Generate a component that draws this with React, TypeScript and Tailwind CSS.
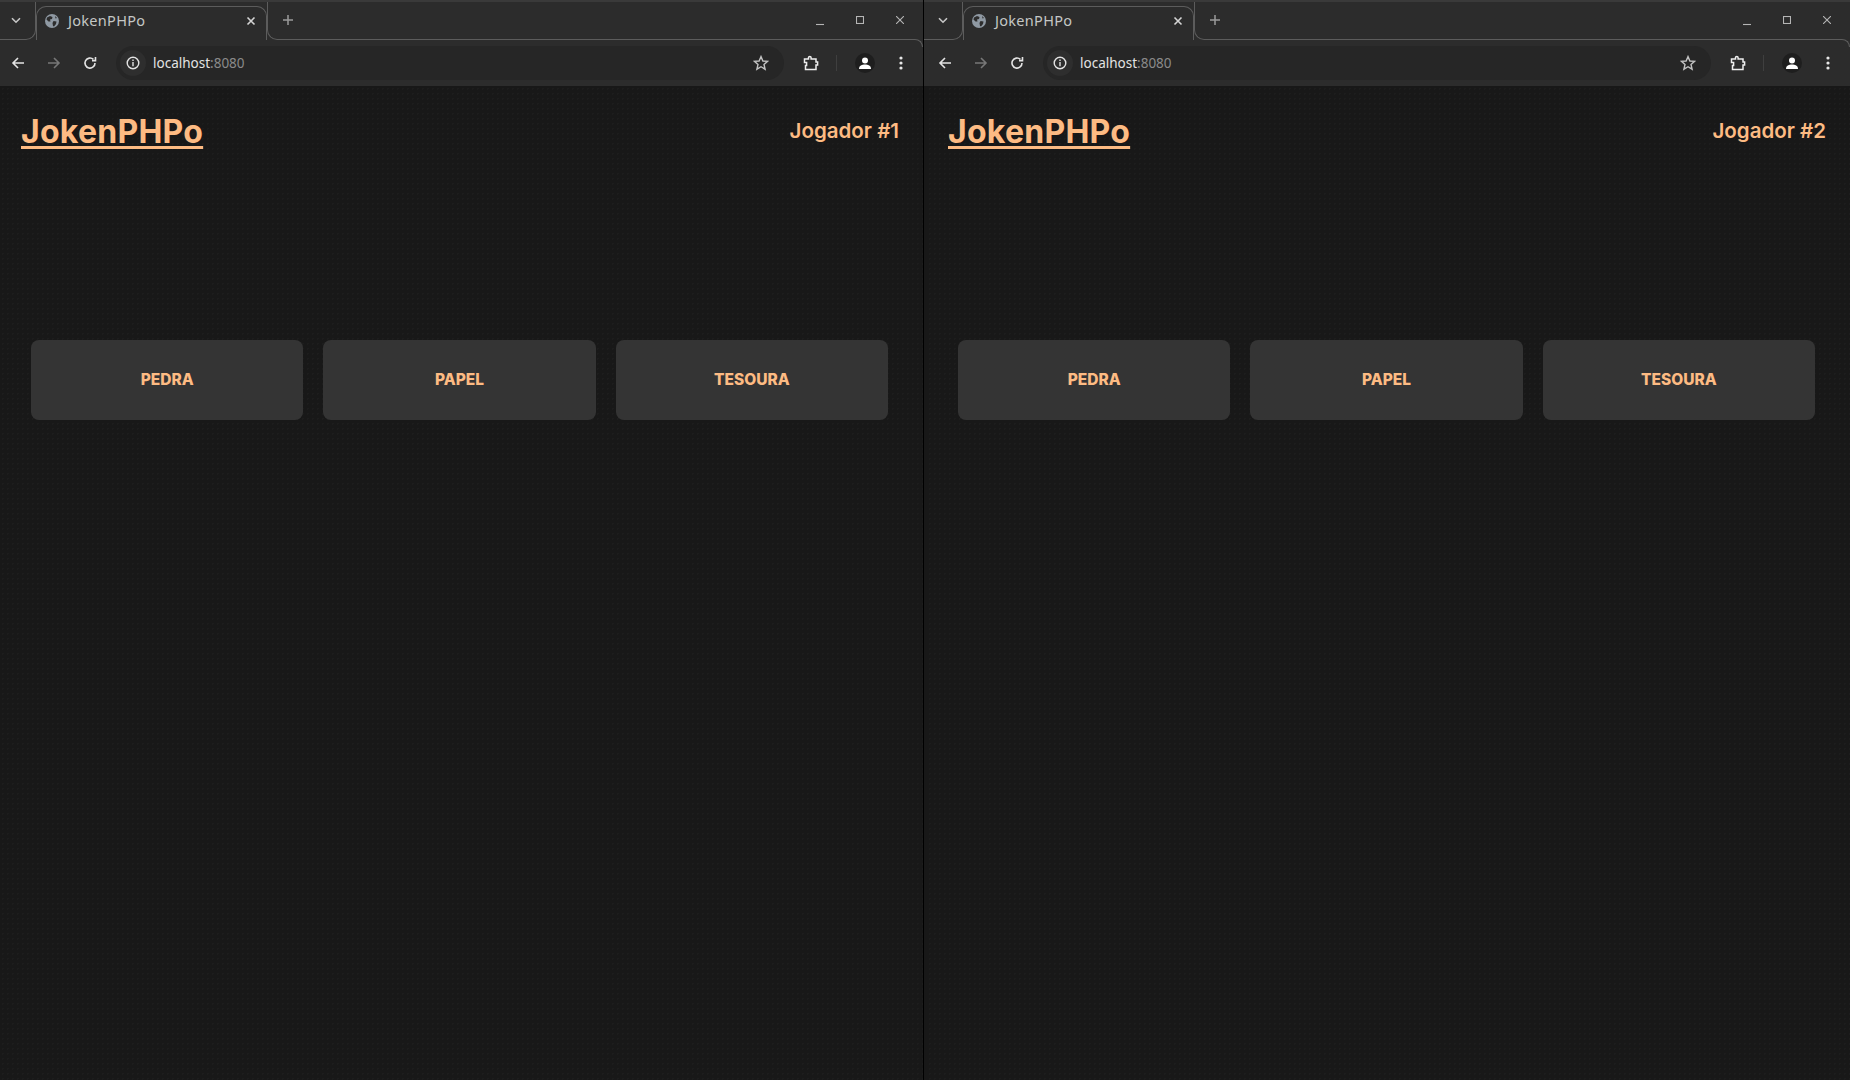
import React from 'react';

const choices = ['PEDRA', 'PAPEL', 'TESOURA'];

function GlobeIcon() {
  return (
    <svg width="14" height="14" viewBox="0 0 14 14" className="shrink-0">
      <circle cx="7" cy="7" r="7" fill="#8f99a3" />
      <path d="M2 3.5 L5 2 L7.5 3 L7 5 L5 5.5 L5.5 7.5 L3.5 7.5 L1.5 5.5 Z M8.5 7 L11.5 7.5 L11 10 L9 12.5 L8 12 L7.5 9 Z M10 2 L12 4 L10.5 4.5 Z" fill="#2d2d2d" />
    </svg>
  );
}

function BrowserChrome() {
  return (
    <div className="h-[86px] shrink-0 flex flex-col bg-[#2c2c2c] border-t-2 border-[#3a3a3a]">
      {/* tab strip */}
      <div className="h-[38px] flex shrink-0">
        <div className="w-[36px] h-[38px] shrink-0 border-b border-r border-[#5c5c5c] rounded-br-[10px] flex items-center justify-center pr-[4px]">
          <svg width="10" height="7" viewBox="0 0 10 7" fill="none" stroke="#c7c7c7" strokeWidth="1.6">
            <path d="M1 1.2 L5 5.2 L9 1.2" />
          </svg>
        </div>
        <div className="w-[231px] mt-[4px] h-[34px] shrink-0 border-t border-l border-r border-[#5c5c5c] rounded-t-[10px] flex items-center pl-[8px] pr-[10px] pb-[6px]">
          <GlobeIcon />
          <span className="ml-[9px] text-[14.5px] text-[#c4c7c5] font-['Noto_Sans',sans-serif] flex-1 tracking-[0.3px]">JokenPHPo</span>
          <svg width="10" height="10" viewBox="0 0 10 10" stroke="#d5d5d5" strokeWidth="1.6">
            <path d="M1.5 1.5 L8.5 8.5 M8.5 1.5 L1.5 8.5" />
          </svg>
        </div>
        <div className="flex-1 h-[38px] border-b border-l border-[#5c5c5c] rounded-bl-[10px] flex items-center pl-[14px] pb-[1px]">
          <svg width="12" height="12" viewBox="0 0 12 12" stroke="#9a9a9a" strokeWidth="1.5">
            <path d="M6 1 V11 M1 6 H11" />
          </svg>
          <div className="flex-1" />
          <div className="flex items-center gap-[32px] pr-[11px]">
            <svg width="8" height="8" viewBox="0 0 8 8" stroke="#b5b5b5" strokeWidth="1.1" className="mt-[3px]">
              <path d="M0 6.5 H8" />
            </svg>
            <svg width="8" height="8" viewBox="0 0 8 8" fill="none" stroke="#b5b5b5" strokeWidth="1.1">
              <rect x="0.5" y="0.5" width="7" height="7" />
            </svg>
            <svg width="8" height="8" viewBox="0 0 8 8" stroke="#b5b5b5" strokeWidth="1.1">
              <path d="M0 0 L8 8 M8 0 L0 8" />
            </svg>
          </div>
        </div>
        <div className="w-[8px] shrink-0" />
      </div>
      {/* toolbar */}
      <div className="relative flex-1 flex items-center pl-[11px] pr-[12px]">
        <div className="absolute top-[-1px] right-0 w-[9px] h-[8px] border-t border-r border-[#5c5c5c] rounded-tr-[8px]" />
        <svg width="14" height="14" viewBox="0 0 14 14" fill="none" stroke="#e3e3e3" strokeWidth="1.6">
          <path d="M13 7 H2 M7 2 L2 7 L7 12" />
        </svg>
        <svg width="14" height="14" viewBox="0 0 14 14" fill="none" stroke="#777" strokeWidth="1.6" className="ml-[22px]">
          <path d="M1 7 H12 M7 2 L12 7 L7 12" />
        </svg>
        <svg width="14" height="14" viewBox="0 0 14 14" fill="none" stroke="#e3e3e3" strokeWidth="1.6" className="ml-[22px]">
          <path d="M12 7 A5 5 0 1 1 10.4 3.4" />
          <path d="M12.5 1 V4.6 H9" />
        </svg>
        <div className="ml-[19px] w-[668px] h-[34px] rounded-full bg-[#262626] flex items-center pl-[4px]">
          <div className="w-[26px] h-[26px] rounded-full bg-[#2e2e2e] flex items-center justify-center">
            <svg width="14" height="14" viewBox="0 0 14 14" fill="none" stroke="#e3e3e3" strokeWidth="1.4">
              <circle cx="7" cy="7" r="5.8" />
              <path d="M7 6 V10.2 M7 3.6 V5" />
            </svg>
          </div>
          <span className="ml-[7px] text-[13.5px] font-['Noto_Sans',sans-serif] text-[#e3e3e3] pt-[1px]">
            localhost<span className="text-[#8a8a8a]">:8080</span>
          </span>
          <div className="flex-1" />
          <svg width="16" height="16" viewBox="0 0 16 16" fill="none" stroke="#c2c2c2" strokeWidth="1.4" className="mr-[15px]">
            <path d="M8 1.6 L9.9 6 L14.6 6.4 L11 9.5 L12.1 14.2 L8 11.7 L3.9 14.2 L5 9.5 L1.4 6.4 L6.1 6 Z" />
          </svg>
        </div>
        <svg width="16" height="16" viewBox="0 0 16 16" fill="none" stroke="#eeeeee" strokeWidth="1.5" className="ml-[19px]">
          <path d="M1.5 4 H5.5 V2.8 A1.3 1.3 0 0 1 8.1 2.8 V4 H13 V7 H14.6 V10 H13 V14.5 H2.5 V10.5 H3.6 V7.5 H1.5 Z" />
        </svg>
        <div className="w-px h-[16px] bg-[#3f3f3f] ml-[17px]" />
        <div className="ml-[18px] w-[20px] h-[20px] rounded-full bg-[#1e1e1e] flex items-center justify-center">
          <svg width="14" height="14" viewBox="0 0 14 14" fill="#ffffff">
            <circle cx="7" cy="4.5" r="3" />
            <path d="M1 13 C1 9.5 4 8.6 7 8.6 C10 8.6 13 9.5 13 13 Z" />
          </svg>
        </div>
        <svg width="4" height="14" viewBox="0 0 4 14" fill="#e8e8e8" className="ml-[24px]">
          <circle cx="2" cy="2" r="1.6" />
          <circle cx="2" cy="7" r="1.6" />
          <circle cx="2" cy="12" r="1.6" />
        </svg>
      </div>
    </div>
  );
}

function GameWindow({ player }: { player: number }) {
  return (
    <div className="w-[923px] shrink-0 min-w-0 flex flex-col h-full">
      <BrowserChrome />
      <div className="flex-1 bg-[#181818] bg-[radial-gradient(#1d1d1d_1px,transparent_1px)] bg-[length:5px_5px]">
        <header className="flex items-center justify-between pl-[21px] pr-[24px] pt-[24px]">
          <a className="text-[32px] leading-[44px] font-bold underline underline-offset-[3px] tracking-[0.25px] text-[#fdbb83] font-['Inter',sans-serif]">JokenPHPo</a>
          <span className="text-[20.5px] font-semibold text-[#fdbb83] font-['Inter',sans-serif] pb-[2px]">Jogador #{player}</span>
        </header>
        <div className="flex gap-[20px] pl-[31px] pr-[35px] mt-[186px]">
          {choices.map((c) => (
            <button key={c} className="flex-1 h-[80px] rounded-[8px] bg-[#343434] text-[15.5px] font-extrabold text-[#fdbb83] font-['Inter',sans-serif]">
              {c}
            </button>
          ))}
        </div>
      </div>
    </div>
  );
}

export default function App() {
  return (
    <div className="w-[1850px] h-[1080px] flex overflow-hidden bg-black">
      <GameWindow player={1} />
      <div className="w-[1px] shrink-0 bg-black" />
      {/* gap left of the second window */}
      <div className="w-[3px] shrink-0 flex flex-col bg-[#181818]">
        <div className="h-[86px] bg-[#2c2c2c] border-t-2 border-[#3a3a3a]">
          <div className="h-[38px] border-b border-[#5c5c5c]" />
        </div>
      </div>
      <GameWindow player={2} />
    </div>
  );
}
